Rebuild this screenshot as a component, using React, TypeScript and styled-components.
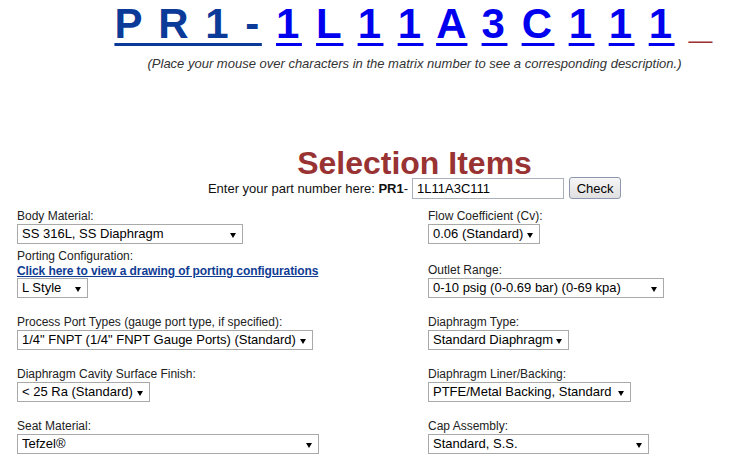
import styled, { createGlobalStyle } from 'styled-components'

const GlobalStyle = createGlobalStyle`
  html, body {
    margin: 0;
    padding: 0;
    background: #fff;
  }
  body {
    font-family: "Liberation Sans", Arial, sans-serif;
    color: #222;
  }
`

const Page = styled.div`
  width: 100%;
`

const Centered = styled.div`
  padding-left: 98px;
  text-align: center;
`

const Matrix = styled.div`
  font-size: 42px;
  font-weight: bold;
  line-height: 47px;
  letter-spacing: 2.5px;
  white-space: pre;
`

const Prefix = styled.a`
  color: #0b3a98;
  text-decoration: underline;
  text-decoration-thickness: 3px;
  text-underline-offset: 5px;
`

const Char = styled.a`
  color: #0000ee;
  text-decoration: underline;
  text-decoration-thickness: 3px;
  text-underline-offset: 5px;
`

const Blank = styled.span`
  color: #993333;
`

const Note = styled.div`
  margin-top: 9px;
  font-size: 13px;
  font-style: italic;
  line-height: 16px;
  color: #333;
`

const Heading = styled.h1`
  margin: 78px 0 0;
  font-size: 32px;
  line-height: 27px;
  font-weight: bold;
  color: #993333;
`

const PartRow = styled.div`
  display: flex;
  justify-content: center;
  align-items: center;
  height: 22px;
  font-size: 13px;
  line-height: 15px;
  color: #111;
`

const PartInput = styled.input`
  box-sizing: border-box;
  width: 152px;
  height: 21px;
  margin-left: 4px;
  padding: 0 4px;
  border: 1px solid #a9b0ba;
  font: 13px "Liberation Sans", Arial, sans-serif;
  color: #000;
`

const CheckButton = styled.button`
  box-sizing: border-box;
  width: 52px;
  height: 22px;
  margin-left: 5px;
  padding: 0;
  border: 1px solid #8e97b0;
  border-radius: 3px;
  background: linear-gradient(#f6f6f6, #e0e0e0);
  font: 13px "Liberation Sans", Arial, sans-serif;
  color: #000;
`

const Form = styled.div`
  margin-top: 9px;
  padding-left: 17px;
`

const Row = styled.div<{ $gap: number }>`
  display: grid;
  grid-template-columns: 411px 1fr;
  align-items: end;
  margin-top: ${(p) => p.$gap}px;
`

const Field = styled.div`
  display: flex;
  flex-direction: column;
  align-items: flex-start;
`

const Label = styled.label`
  font-size: 12px;
  line-height: 16px;
  color: #222;
`

const DrawingLink = styled.a`
  font-size: 12px;
  font-weight: bold;
  line-height: 14px;
  letter-spacing: -0.1px;
  color: #103c94;
  text-decoration: underline;
`

const SelectBox = styled.span`
  position: relative;
  display: inline-block;

  &::after {
    content: '';
    position: absolute;
    right: 7px;
    top: 9px;
    border-left: 3px solid transparent;
    border-right: 3px solid transparent;
    border-top: 5px solid #000;
    pointer-events: none;
  }
`

const Select = styled.select<{ $w: number }>`
  appearance: none;
  box-sizing: border-box;
  width: ${(p) => p.$w}px;
  height: 20px;
  margin: 0;
  padding: 0 4px;
  border: 1px solid #a9a9a9;
  border-radius: 0;
  background: #fff;
  font: 13px/18px "Liberation Sans", Arial, sans-serif;
  color: #000;
`

const Dropdown = ({ value, w }: { value: string; w: number }) => (
  <SelectBox>
    <Select $w={w} defaultValue={value}>
      <option>{value}</option>
    </Select>
  </SelectBox>
)

const chars = ['1', 'L', '1', '1', 'A', '3', 'C', '1', '1', '1']

const App = () => {
  return (
    <Page>
      <GlobalStyle />
      <Centered>
        <Matrix>
          <Prefix>P R 1 -</Prefix>
          {' '}
          {chars.map((c, i) => (
            <span key={i}>
              <Char>{c}</Char>{' '}
            </span>
          ))}
          <Blank>_</Blank>
        </Matrix>
        <Note>(Place your mouse over characters in the matrix number to see a corresponding description.)</Note>
        <Heading>Selection Items</Heading>
        <PartRow>
          <span>Enter your part number here: <b>PR1</b>-</span>
          <PartInput defaultValue="1L11A3C111" />
          <CheckButton>Check</CheckButton>
        </PartRow>
      </Centered>

      <Form>
        <Row $gap={0}>
          <Field>
            <Label>Body Material:</Label>
            <Dropdown value="SS 316L, SS Diaphragm" w={226} />
          </Field>
          <Field>
            <Label>Flow Coefficient (Cv):</Label>
            <Dropdown value="0.06 (Standard)" w={112} />
          </Field>
        </Row>
        <Row $gap={4}>
          <Field>
            <Label>Porting Configuration:</Label>
            <DrawingLink>Click here to view a drawing of porting configurations</DrawingLink>
            <Dropdown value="L Style" w={71} />
          </Field>
          <Field>
            <Label>Outlet Range:</Label>
            <Dropdown value="0-10 psig (0-0.69 bar) (0-69 kpa)" w={236} />
          </Field>
        </Row>
        <Row $gap={16}>
          <Field>
            <Label>Process Port Types (gauge port type, if specified):</Label>
            <Dropdown value='1/4" FNPT (1/4" FNPT Gauge Ports) (Standard)' w={296} />
          </Field>
          <Field>
            <Label>Diaphragm Type:</Label>
            <Dropdown value="Standard Diaphragm" w={141} />
          </Field>
        </Row>
        <Row $gap={16}>
          <Field>
            <Label>Diaphragm Cavity Surface Finish:</Label>
            <Dropdown value="< 25 Ra (Standard)" w={133} />
          </Field>
          <Field>
            <Label>Diaphragm Liner/Backing:</Label>
            <Dropdown value="PTFE/Metal Backing, Standard" w={203} />
          </Field>
        </Row>
        <Row $gap={16}>
          <Field>
            <Label>Seat Material:</Label>
            <Dropdown value="Tefzel®" w={302} />
          </Field>
          <Field>
            <Label>Cap Assembly:</Label>
            <Dropdown value="Standard, S.S." w={221} />
          </Field>
        </Row>
      </Form>
    </Page>
  )
}

export default App
